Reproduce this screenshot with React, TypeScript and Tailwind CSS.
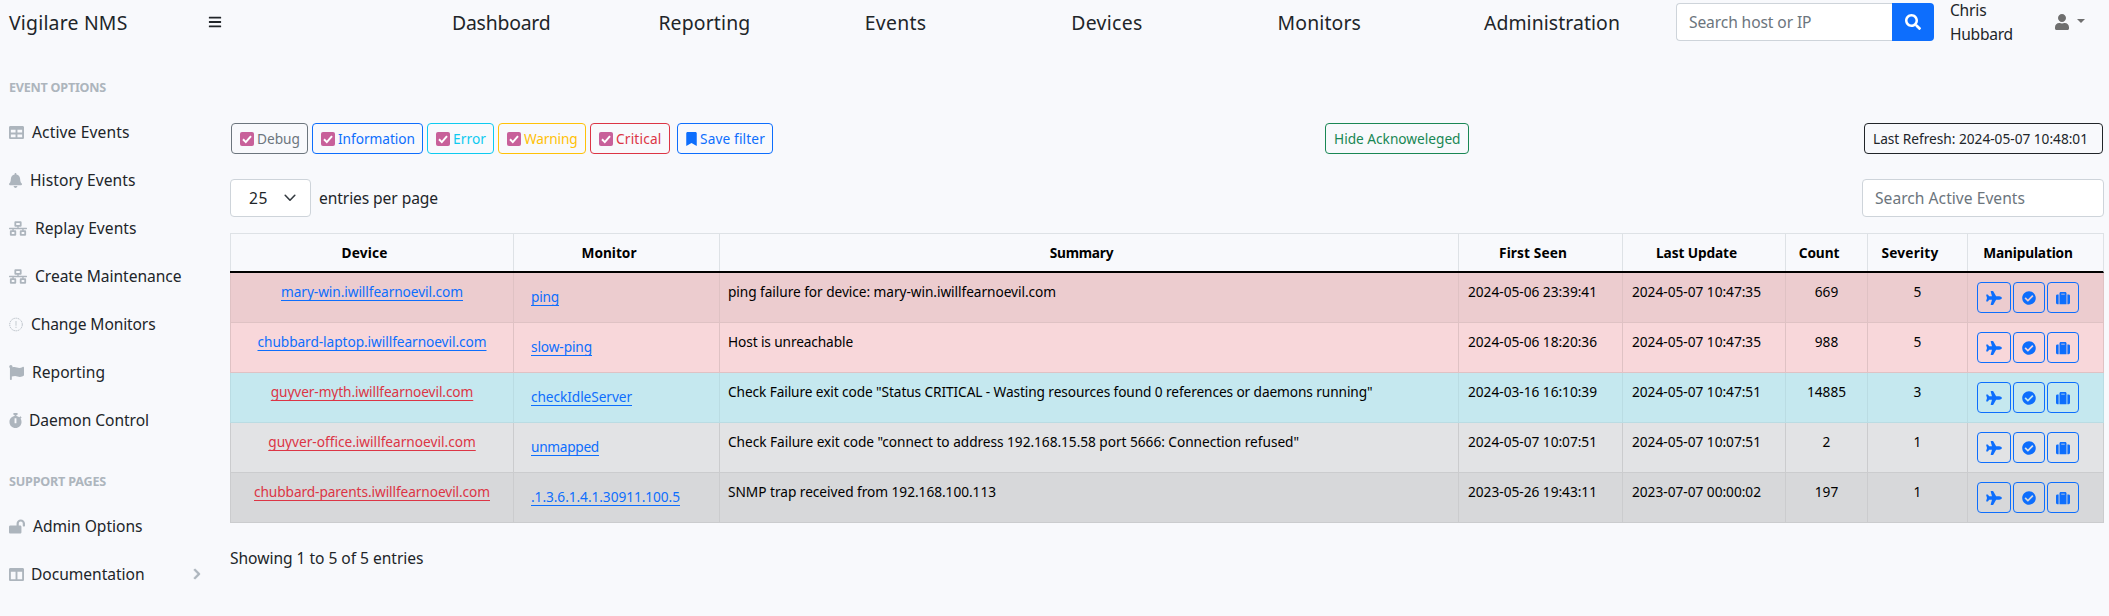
import React, { useLayoutEffect, useRef, useState } from "react";
import type { ReactNode } from "react";
import type { IconType } from "react-icons";
import {
  FaBars,
  FaBell,
  FaBookmark,
  FaCheckCircle,
  FaChevronRight,
  FaColumns,
  FaFlag,
  FaLockOpen,
  FaNetworkWired,
  FaPlane,
  FaSearch,
  FaStopwatch,
  FaSuitcase,
  FaTable,
  FaUser,
} from "react-icons/fa";

/** One line of text whose tracking is adjusted so that it fills `w` pixels. */
function Fit({ w, children, className = "" }: { w: number; children: string; className?: string }) {
  const ref = useRef<HTMLSpanElement>(null);
  const [spacing, setSpacing] = useState(0);
  useLayoutEffect(() => {
    const el = ref.current;
    if (!el) return;
    el.style.letterSpacing = "0px";
    const natural = el.getBoundingClientRect().width;
    const next = (w - natural) / children.length;
    el.style.letterSpacing = `${next}px`;
    setSpacing(next);
  }, [w, children]);
  return (
    <span ref={ref} className={`inline-block whitespace-nowrap ${className}`} style={{ letterSpacing: `${spacing}px` }}>
      {children}
    </span>
  );
}

function PlaceholderIcon({ className }: { className?: string }) {
  return (
    <svg viewBox="0 0 16 16" className={className} fill="none" stroke="currentColor">
      <circle cx="8" cy="8" r="7.2" strokeWidth="1" strokeDasharray="1.6 0.9" />
      <path d="M8 4v5.4M8 10.6v1.4" strokeWidth="1.1" opacity="0.7" />
    </svg>
  );
}

type NavEntry = { label: string; w: number; icon: IconType | typeof PlaceholderIcon; size: string; more?: boolean };

const eventOptions: NavEntry[] = [
  { label: "Active Events", w: 97.5, icon: FaTable, size: "w-[15px] h-[15px] mr-[8px]" },
  { label: "History Events", w: 105.5, icon: FaBell, size: "w-[13px] h-[15px] mr-[8px]" },
  { label: "Replay Events", w: 101.5, icon: FaNetworkWired, size: "w-[18px] h-[15px] mr-[8px]" },
  { label: "Create Maintenance", w: 146.5, icon: FaNetworkWired, size: "w-[18px] h-[15px] mr-[8px]" },
  { label: "Change Monitors", w: 124.5, icon: PlaceholderIcon, size: "w-[14px] h-[15px] mr-[8px]" },
  { label: "Reporting", w: 73, icon: FaFlag, size: "w-[15px] h-[15px] mr-[8px]" },
  { label: "Daemon Control", w: 120, icon: FaStopwatch, size: "w-[13px] h-[15px] mr-[7px]" },
];

const supportPages: NavEntry[] = [
  { label: "Admin Options", w: 109.5, icon: FaLockOpen, size: "w-[16px] h-[15px] mr-[8px]" },
  { label: "Documentation", w: 113.5, icon: FaColumns, size: "w-[15px] h-[15px] mr-[7px]", more: true },
];

const topNav = [
  { label: "Dashboard", w: 98.5 },
  { label: "Reporting", w: 92 },
  { label: "Events", w: 61.5 },
  { label: "Devices", w: 71.5 },
  { label: "Monitors", w: 83.5 },
  { label: "Administration", w: 136 },
];

const filters = [
  { label: "Debug", w: 43, box: "w-[77px] border-[#6c757d] text-[#6c757d]" },
  { label: "Information", w: 77, box: "w-[111px] border-[#0d6efd] text-[#0d6efd]" },
  { label: "Error", w: 33, box: "w-[67px] border-[#0dcaf0] text-[#0dcaf0]" },
  { label: "Warning", w: 53.5, box: "w-[88px] border-[#ffc107] text-[#ffc107]" },
  { label: "Critical", w: 45.5, box: "w-[80px] border-[#dc3545] text-[#dc3545]" },
];

const headings = [
  { label: "Device", w: 46 },
  { label: "Monitor", w: 55 },
  { label: "Summary", w: 63.5 },
  { label: "First Seen", w: 68 },
  { label: "Last Update", w: 81 },
  { label: "Count", w: 40.5 },
  { label: "Severity", w: 57 },
  { label: "Manipulation", w: 89.5 },
];

const rows = [
  {
    device: "mary-win.iwillfearnoevil.com", dw: 182, link: "text-[#0d6efd]",
    monitor: "ping", mw: 28,
    summary: "ping failure for device: mary-win.iwillfearnoevil.com", sw: 328,
    first: "2024-05-06 23:39:41", last: "2024-05-07 10:47:35", count: "669", severity: "5",
    tone: "bg-[#eccccf] border-[#dfc2c4]",
  },
  {
    device: "chubbard-laptop.iwillfearnoevil.com", dw: 229, link: "text-[#0d6efd]",
    monitor: "slow-ping", mw: 61,
    summary: "Host is unreachable", sw: 125,
    first: "2024-05-06 18:20:36", last: "2024-05-07 10:47:35", count: "988", severity: "5",
    tone: "bg-[#f8d7da] border-[#dfc2c4]",
  },
  {
    device: "guyver-myth.iwillfearnoevil.com", dw: 202.5, link: "text-[#dc3545]",
    monitor: "checkIdleServer", mw: 101,
    summary: 'Check Failure exit code "Status CRITICAL - Wasting resources found 0 references or daemons running"', sw: 644.5,
    first: "2024-03-16 16:10:39", last: "2024-05-07 10:47:51", count: "14885", severity: "3",
    tone: "bg-[#c5e8ef] border-[#badce3]",
  },
  {
    device: "guyver-office.iwillfearnoevil.com", dw: 207.5, link: "text-[#dc3545]",
    monitor: "unmapped", mw: 68,
    summary: 'Check Failure exit code "connect to address 192.168.15.58 port 5666: Connection refused"', sw: 571,
    first: "2024-05-07 10:07:51", last: "2024-05-07 10:07:51", count: "2", severity: "1",
    tone: "bg-[#e2e3e5] border-[#cbccce]",
  },
  {
    device: "chubbard-parents.iwillfearnoevil.com", dw: 236, link: "text-[#dc3545]",
    monitor: ".1.3.6.1.4.1.30911.100.5", mw: 149,
    summary: "SNMP trap received from 192.168.100.113", sw: 268,
    first: "2023-05-26 19:43:11", last: "2023-07-07 00:00:02", count: "197", severity: "1",
    tone: "bg-[#d7d8da] border-[#cbccce]",
  },
];

const columns = "grid grid-cols-[283px_206px_739px_164px_163px_82px_100px_136px]";

function SideItem({ item }: { item: NavEntry }) {
  const Icon = item.icon;
  return (
    <a className="flex h-12 items-center pl-[9px] text-[#212529]">
      <Icon className={`shrink-0 text-[#adb5bd] ${item.size}`} />
      <Fit w={item.w}>{item.label}</Fit>
      {item.more && <FaChevronRight className="mr-[14px] ml-auto size-[12px] stroke-current stroke-[24] text-[#adb5bd]" />}
    </a>
  );
}

function ActionButton({ className, children }: { className: string; children: ReactNode }) {
  return (
    <button className={`flex h-[31px] items-center justify-center rounded-[4px] border border-[#0d6efd] text-sm text-[#0d6efd] ${className}`}>
      {children}
    </button>
  );
}

function Cell({ tone, className = "pt-2", children }: { tone: string; className?: string; children: ReactNode }) {
  return <div className={`border-b border-l ${tone} ${className}`}>{children}</div>;
}

function Sidebar() {
  return (
    <aside className="w-[217px] shrink-0 text-[15.6px] leading-6">
      <div className="mt-px h-[18px] pl-[9px] text-[12.6px] leading-[18px] font-bold text-[#adb5bd]">
        <Fit w={97}>EVENT OPTIONS</Fit>
      </div>
      <nav className="mt-[11px]">
        {eventOptions.map((item) => <SideItem key={item.label} item={item} />)}
      </nav>
      <div className="mt-[29px] h-[18px] pl-[9px] text-[12.6px] leading-[18px] font-bold text-[#adb5bd]">
        <Fit w={97}>SUPPORT PAGES</Fit>
      </div>
      <nav className="mt-[11px]">
        {supportPages.map((item) => <SideItem key={item.label} item={item} />)}
      </nav>
    </aside>
  );
}

function Header() {
  return (
    <header className="flex h-[78px] items-start pl-[9px]">
      <div className="w-[200px] pt-[8px] text-[19.4px] leading-[30px]">
        <Fit w={118.5}>Vigilare NMS</Fit>
      </div>
      <FaBars className="mt-[15px] size-[14px] shrink-0 -translate-x-px" />
      <nav className="ml-[229px] grid grid-cols-[repeat(6,206.4px)] pt-[8px] text-[19.4px] leading-[30px]">
        {topNav.map((n) => <a key={n.label}><Fit w={n.w}>{n.label}</Fit></a>)}
      </nav>
      <div className="ml-[-14.4px] mt-[3px] flex h-[38px] w-[258px] shrink-0 text-[15.6px] leading-6">
        <div className="flex flex-1 items-center rounded-l-[4px] border border-r-0 border-[#ced4da] bg-white pl-[12px] text-[#6c757d]">
          <Fit w={122.5}>Search host or IP</Fit>
        </div>
        <button className="flex w-[42px] items-center justify-center rounded-r-[4px] bg-[#0d6efd] text-white">
          <FaSearch className="size-4" />
        </button>
      </div>
      <div className="-mt-[2px] ml-[16px] flex w-[105px] flex-col items-start text-[15.6px] leading-6">
        <Fit w={36.5}>Chris</Fit>
        <Fit w={63}>Hubbard</Fit>
      </div>
      <div className="mt-[14px] flex items-start text-[#6f6f6f]">
        <FaUser className="h-4 w-[14px]" />
        <svg viewBox="0 0 8 4" className="ml-[8px] mt-[5px] h-[4px] w-[8px]" fill="currentColor"><path d="M0 0h8L4 4z" /></svg>
      </div>
    </header>
  );
}

function Toolbar() {
  return (
    <div className="flex h-[31px] text-[13.7px] leading-[21px]">
      <div className="flex gap-1 pl-px">
        {filters.map((f) => (
          <div key={f.label} className={`flex items-center rounded-[4px] border pl-[8px] ${f.box}`}>
            <svg viewBox="0 0 14 14" className="mr-[3px] size-[14px]">
              <rect width="14" height="14" rx="2" fill="#c8609a" />
              <path d="M3 7.3l2.8 2.8L11 4.2" fill="none" stroke="white" strokeWidth="2" />
            </svg>
            <Fit w={f.w}>{f.label}</Fit>
          </div>
        ))}
      </div>
      <button className="ml-[7px] flex w-[96px] items-center rounded-[4px] border border-[#0d6efd] pl-[8px] text-[#0d6efd]">
        <FaBookmark className="mr-[3px] h-[14px] w-[11px]" />
        <Fit w={65}>Save filter</Fit>
      </button>
      <button className="ml-[552px] flex w-[144px] items-center rounded-[4px] border border-[#198754] pl-[8px] text-[#198754]">
        <Fit w={126.5}>Hide Acknoweleged</Fit>
      </button>
      <div className="mr-px ml-auto flex w-[239px] items-center rounded-[4px] border border-[#212529] pl-[8px]">
        <Fit w={215}>Last Refresh: 2024-05-07 10:48:01</Fit>
      </div>
    </div>
  );
}

function EventTable() {
  return (
    <div className="mt-4 text-[13.7px] leading-[21px] text-black">
      <div className={`${columns} h-[40px] border-t border-r border-b-2 border-t-[#dee2e6] border-r-[#dee2e6] border-b-black font-bold`}>
        {headings.map((h) => (
          <div key={h.label} className="border-l border-[#dee2e6] pt-2 pr-[15px] text-center">
            <Fit w={h.w}>{h.label}</Fit>
          </div>
        ))}
      </div>
      {rows.map((r) => (
        <div key={r.device} className={`${columns} h-[50px] border-r ${r.tone}`}>
          <Cell tone={r.tone} className="pt-2 text-center">
            <a className={r.link}><Fit w={r.dw} className="underline underline-offset-[3px]">{r.device}</Fit></a>
          </Cell>
          <Cell tone={r.tone} className="pt-[13px] pl-[17px]">
            <a className="text-[#0d6efd]"><Fit w={r.mw} className="underline underline-offset-[3px]">{r.monitor}</Fit></a>
          </Cell>
          <Cell tone={r.tone} className="pt-2 pl-[8px]"><Fit w={r.sw}>{r.summary}</Fit></Cell>
          <Cell tone={r.tone} className="pt-2 pl-[9px]"><Fit w={129}>{r.first}</Fit></Cell>
          <Cell tone={r.tone} className="pt-2 pl-[9px]"><Fit w={129}>{r.last}</Fit></Cell>
          <Cell tone={r.tone} className="pt-2 text-center">{r.count}</Cell>
          <Cell tone={r.tone} className="pt-2 text-center">{r.severity}</Cell>
          <Cell tone={r.tone} className="flex gap-[2px] pt-[9px] pl-[9px]">
            <ActionButton className="w-[34px]"><FaPlane className="h-[14px] w-4" /></ActionButton>
            <ActionButton className="w-[32px]"><FaCheckCircle /></ActionButton>
            <ActionButton className="w-[32px]"><FaSuitcase /></ActionButton>
          </Cell>
        </div>
      ))}
    </div>
  );
}

export default function App() {
  return (
    <div className="min-h-[616px] w-full overflow-hidden bg-[#f8f9fc] font-['Noto_Sans',sans-serif] text-[#212529]">
      <Header />
      <div className="flex">
        <Sidebar />
        <main className="ml-[13px] w-[1874px] pt-[45px]">
          <Toolbar />
          <div className="mt-[25px] flex h-[38px] items-center text-[15.6px] leading-6">
            <div className="flex h-full w-[81px] items-center rounded-[4px] border border-[#ced4da] bg-white pl-[18px]">
              <Fit w={19}>25</Fit>
              <svg viewBox="0 0 12 8" className="ml-[16px] h-[8px] w-[12px]" fill="none" stroke="#343a40" strokeWidth="1.6" strokeLinecap="round" strokeLinejoin="round">
                <path d="M1.2 1.3L6 6.2l4.8-4.9" />
              </svg>
            </div>
            <Fit w={119} className="ml-[8px]">entries per page</Fit>
            <div className="ml-auto flex h-full w-[242px] items-center rounded-[4px] border border-[#ced4da] bg-white pl-[12px] text-[#6c757d]">
              <Fit w={150}>Search Active Events</Fit>
            </div>
          </div>
          <EventTable />
          <div className="mt-[23px] text-[15.6px] leading-6">
            <Fit w={193.5}>Showing 1 to 5 of 5 entries</Fit>
          </div>
        </main>
      </div>
    </div>
  );
}
